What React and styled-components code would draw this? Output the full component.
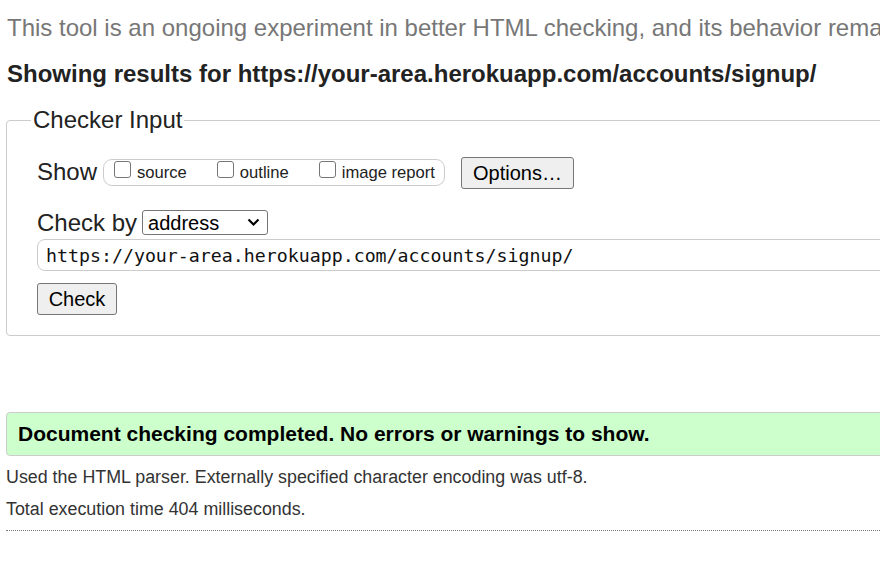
import React from 'react';
import styled, { createGlobalStyle } from 'styled-components';

const GlobalStyle = createGlobalStyle`
  html, body {
    margin: 0;
    padding: 0;
    overflow: hidden;
    background: #ffffff;
  }
  body {
    font-family: 'Liberation Sans', Arial, sans-serif;
    color: #222222;
  }
`;

const Page = styled.div`
  width: 1300px;
  padding-left: 6px;
`;

const Intro = styled.p`
  margin: 15px 0 0 1px;
  font-size: 24px;
  line-height: 26px;
  color: #777777;
  white-space: nowrap;
`;

const Heading = styled.h2`
  margin: 19px 0 0 1px;
  font-size: 24px;
  line-height: 28px;
  font-weight: bold;
  color: #222222;
  white-space: nowrap;
`;

const Fieldset = styled.fieldset`
  margin: 18px 0 0;
  padding: 0 0 20px 30px;
  border: 1px solid #cccccc;
  border-radius: 4px;
  min-width: 0;
`;

const Legend = styled.legend`
  margin-left: -6px;
  padding: 0 2px;
  font-size: 24px;
  line-height: 28px;
  color: #222222;
`;

const Row = styled.div`
  display: flex;
  align-items: center;
  margin-top: ${(p) => p.$top}px;
  height: ${(p) => p.$height}px;
`;

const Label = styled.span`
  font-size: 24px;
  line-height: 28px;
  color: #222222;
  margin-right: ${(p) => p.$gap}px;
  margin-top: ${(p) => p.$shift || 0}px;
`;

const Pill = styled.div`
  display: flex;
  align-items: center;
  height: 25px;
  padding: 0 9px 0 10px;
  border: 1px solid #cccccc;
  border-radius: 9px;
  gap: 30px;
  margin-top: -1px;
`;

const Option = styled.label`
  display: flex;
  align-items: center;
  gap: 6px;
  font-size: 16.6px;
  color: #222222;
`;

const Box = styled.input`
  appearance: none;
  margin: -6px 0 0;
  width: 17px;
  height: 17px;
  border: 1.5px solid #767676;
  border-radius: 3px;
  background: #ffffff;
  box-sizing: border-box;
`;

const Button = styled.button`
  height: 32px;
  width: ${(p) => p.$width}px;
  margin-left: ${(p) => p.$left || 0}px;
  padding: 0;
  font-family: 'Liberation Sans', Arial, sans-serif;
  font-size: 20px;
  color: #000000;
  background: #efefef;
  border: 1px solid #767676;
  border-radius: 3px;
`;

const SelectWrap = styled.div`
  position: relative;
  width: 126px;
  height: 25px;
`;

const Select = styled.select`
  appearance: none;
  width: 100%;
  height: 100%;
  margin: 0;
  padding: 0 0 0 5px;
  font-family: 'Liberation Sans', Arial, sans-serif;
  font-size: 20px;
  color: #000000;
  background: #ffffff;
  border: 1px solid #767676;
  border-radius: 3px;
`;

const Chevron = styled.svg`
  position: absolute;
  right: 8px;
  top: 8px;
  pointer-events: none;
`;

const UrlInput = styled.input`
  display: block;
  box-sizing: border-box;
  width: 1300px;
  height: 32px;
  margin: 4px 0 0;
  padding: 0 8px;
  font-family: 'DejaVu Sans Mono', 'Liberation Mono', monospace;
  font-size: 18.25px;
  color: #111111;
  border: 1px solid #cccccc;
  border-radius: 8px;
  outline: none;
`;

const CheckRow = styled.div`
  margin-top: 12px;
`;

const Success = styled.div`
  margin-top: 76px;
  height: 42px;
  padding-left: 11px;
  display: flex;
  align-items: center;
  background: #ccffcc;
  border: 1px solid #cccccc;
  border-radius: 4px;
  font-size: 21px;
  font-weight: bold;
  color: #000000;
  white-space: nowrap;
`;

const Note = styled.p`
  margin: 10px 0 0;
  font-size: 17.85px;
  line-height: 22px;
  color: #333333;
  white-space: nowrap;
`;

const Rule = styled.hr`
  margin: 10px 0 0;
  border: 0;
  border-top: 1px dotted #777777;
`;

export default function App() {
  return (
    <>
      <GlobalStyle />
      <Page>
        <Intro>
          This tool is an ongoing experiment in better HTML checking, and its
          behavior rema
        </Intro>
        <Heading>
          Showing results for https://your-area.herokuapp.com/accounts/signup/
        </Heading>
        <Fieldset>
          <Legend>Checker Input</Legend>
          <Row $top={23} $height={32}>
            <Label $gap={6} $shift={-3}>
              Show
            </Label>
            <Pill>
              <Option>
                <Box type="checkbox" />
                source
              </Option>
              <Option>
                <Box type="checkbox" />
                outline
              </Option>
              <Option>
                <Box type="checkbox" />
                image report
              </Option>
            </Pill>
            <Button $width={113} $left={16}>
              Options…
            </Button>
          </Row>
          <Row $top={21} $height={25}>
            <Label $gap={5}>Check by</Label>
            <SelectWrap>
              <Select defaultValue="address">
                <option value="address">address</option>
                <option value="file">file upload</option>
                <option value="text">text input</option>
              </Select>
              <Chevron width="13" height="9" viewBox="0 0 13 9">
                <path
                  d="M1.5 1.5 L6.5 6.5 L11.5 1.5"
                  fill="none"
                  stroke="#000"
                  strokeWidth="2.2"
                />
              </Chevron>
            </SelectWrap>
          </Row>
          <UrlInput
            type="text"
            defaultValue="https://your-area.herokuapp.com/accounts/signup/"
          />
          <CheckRow>
            <Button $width={80}>Check</Button>
          </CheckRow>
        </Fieldset>
        <Success>Document checking completed. No errors or warnings to show.</Success>
        <Note>
          Used the HTML parser. Externally specified character encoding was
          utf-8.
        </Note>
        <Note>Total execution time 404 milliseconds.</Note>
        <Rule />
      </Page>
    </>
  );
}
